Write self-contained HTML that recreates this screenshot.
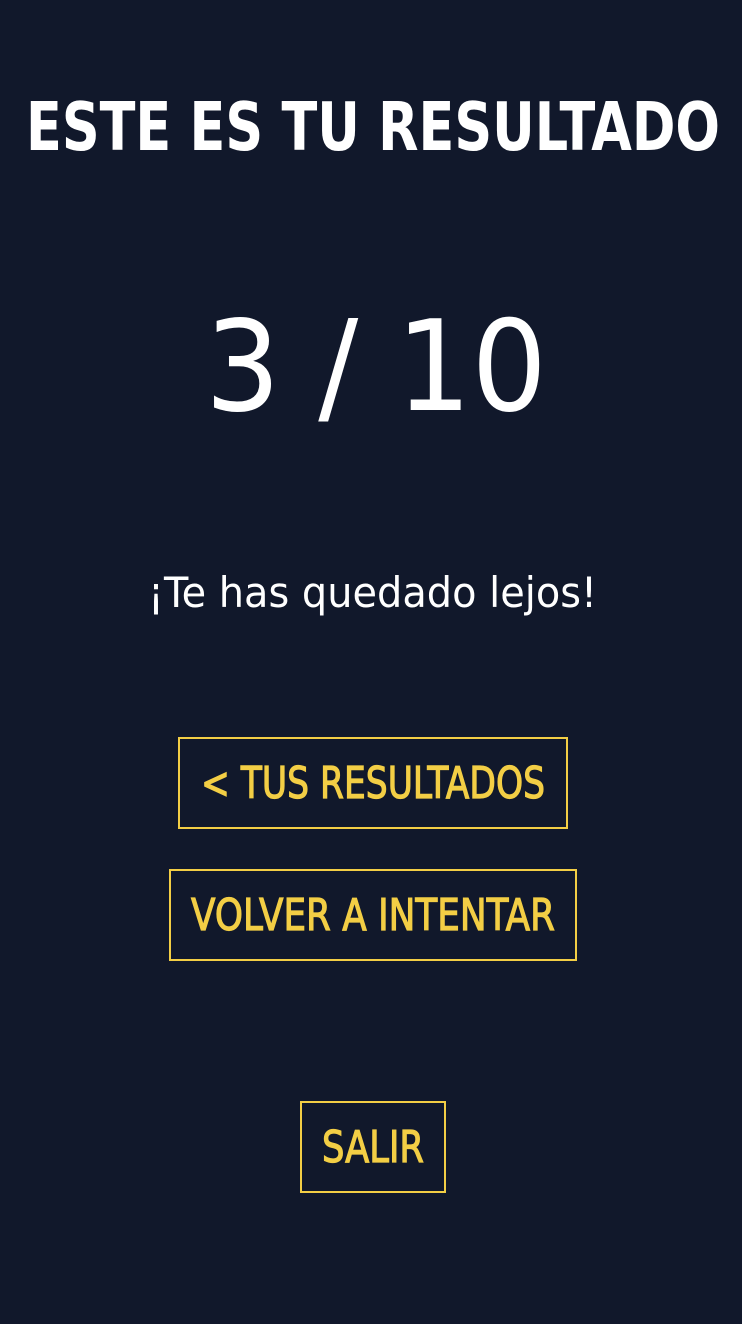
<!DOCTYPE html>
<html><head><meta charset="utf-8"><style>
html,body{margin:0;padding:0;background:#11182b;width:742px;height:1324px;overflow:hidden}
.b{position:absolute;border:2px solid #f3ce45;box-sizing:border-box}
svg{position:absolute;left:0;top:0}
text{font-family:"DejaVu Sans","Liberation Sans",sans-serif}
</style></head><body>
<div class="b" style="left:178px;top:737px;width:390px;height:92px"></div>
<div class="b" style="left:169px;top:869px;width:408px;height:92px"></div>
<div class="b" style="left:300px;top:1101px;width:146px;height:92px"></div>
<svg width="742" height="1324">
<text x="26" y="150" textLength="694" lengthAdjust="spacingAndGlyphs" font-size="67" font-weight="bold" fill="#fff">ESTE ES TU RESULTADO</text>
<text x="205" y="410" textLength="342" lengthAdjust="spacingAndGlyphs" font-size="126" fill="#fff">3 / 10</text>
<text x="148" y="607" textLength="449" lengthAdjust="spacingAndGlyphs" font-size="42" fill="#fff">¡Te has quedado lejos!</text>
<text x="201" y="798" textLength="344" lengthAdjust="spacingAndGlyphs" font-size="44" fill="#f3ce45" stroke="#f3ce45" stroke-width="1.2">&lt; TUS RESULTADOS</text>
<text x="191" y="930" textLength="364" lengthAdjust="spacingAndGlyphs" font-size="44" fill="#f3ce45" stroke="#f3ce45" stroke-width="1.2">VOLVER A INTENTAR</text>
<text x="322" y="1162" textLength="102" lengthAdjust="spacingAndGlyphs" font-size="44" fill="#f3ce45" stroke="#f3ce45" stroke-width="1.2">SALIR</text>
</svg>
</body></html>
